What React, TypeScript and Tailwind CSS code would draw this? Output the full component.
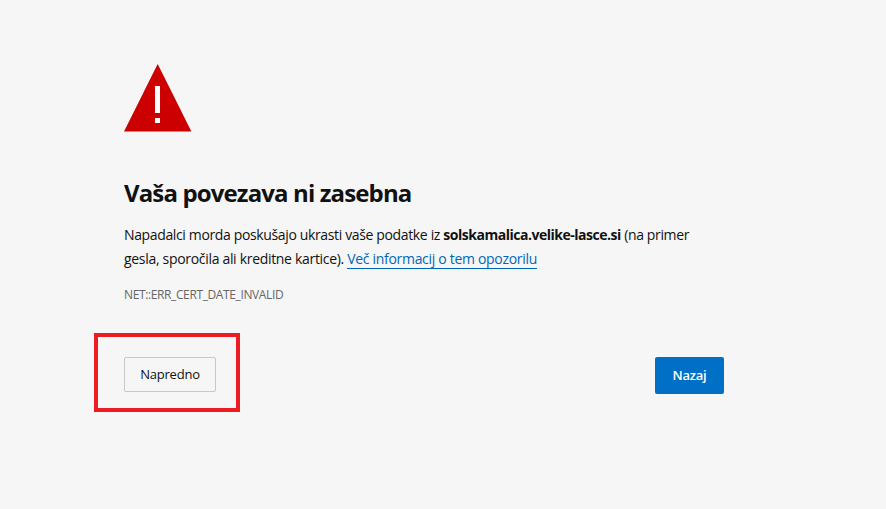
export default function App() {
  return (
    <div className="min-h-[509px] bg-[#f6f6f6] pl-[124px] pt-[64px] font-['Open_Sans',sans-serif] text-[#111]">
      <div className="w-[600px]">
        <svg width="68" height="68" viewBox="0 0 68 68" className="block">
          <path d="M33.7 0 L67.4 67.6 L0 67.6 Z" fill="#cc0000" />
          <rect x="31" y="22" width="5" height="27" fill="#fff" />
          <rect x="31" y="54" width="5" height="5" fill="#fff" />
        </svg>
        <h1 className="mt-[43px] text-[24px] font-bold leading-[36px] tracking-[-0.87px]">Vaša povezava ni zasebna</h1>
        <p className="mt-[12px] text-[14px] leading-[24px] tracking-[-0.36px]">
          Napadalci morda poskušajo ukrasti vaše podatke iz <b className="tracking-[-0.48px]">solskamalica.velike-lasce.si</b> (na primer{' '}
          <span className="tracking-[-0.31px]">gesla, sporočila ali kreditne kartice).</span>{' '}
          <a className="border-b border-[#0067b8] tracking-[-0.31px] text-[#0067b8]">Več informacij o tem opozorilu</a>
        </p>
        <p className="mt-[15px] text-[12px] leading-[18px] tracking-[-0.38px] text-[#666]">NET::ERR_CERT_DATE_INVALID</p>
        <div className="mt-[53px] flex items-start justify-between">
          <div className="relative">
            <button className="h-[35px] w-[92px] rounded-[2px] border border-[#c8c8c8] bg-[#f6f6f6] pt-px text-[13px] tracking-[-0.2px]">Napredno</button>
            <div className="absolute left-[-30px] top-[-24px] h-[79px] w-[146px] border-[4px] border-[#ed1c24]"></div>
          </div>
          <button className="h-[37px] w-[69px] rounded-[2px] bg-[#006fc6] text-[13px] font-semibold tracking-[-0.2px] text-white">Nazaj</button>
        </div>
      </div>
    </div>
  );
}
